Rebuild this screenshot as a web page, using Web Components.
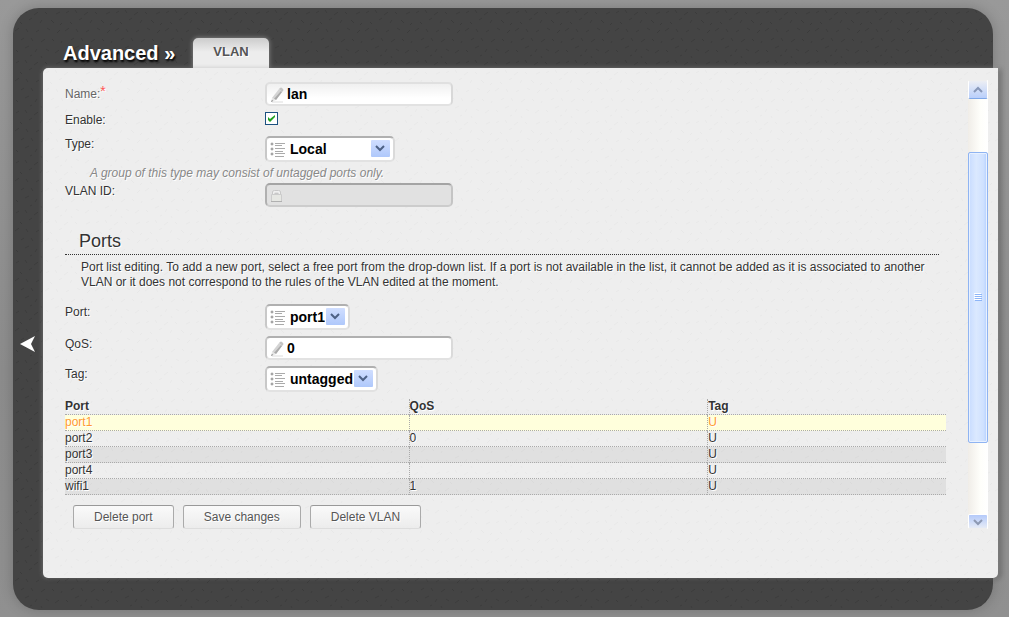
<!DOCTYPE html>
<html lang="en">
<head>
<meta charset="utf-8">
<title>VLAN</title>
<style>
body {
    margin: 0;
    background: linear-gradient(#999, #8c8c8c 60%, #909090);
    color: #333;
    font: 12px/15px "Liberation Sans", Arial, sans-serif;
    text-shadow: 1px 1px 0 #fff;
    min-height: 100vh;
}
</style>
</head>
<body>

<router-shell heading="Advanced »" tab="VLAN">
    <form-field kind="text" label="Name:" value="lan" required soft></form-field>
    <form-field kind="checkbox" label="Enable:"></form-field>
    <form-field kind="select" label="Type:" value="Local" style="--select-width: 130px" hint="A group of this type may consist of untagged ports only."></form-field>
    <form-field kind="text" label="VLAN ID:" value="" disabled></form-field>

    <form-section heading="Ports">
        Port list editing. To add a new port, select a free port from the drop-down list. If a port is not available in the list, it cannot be added as it is associated to another VLAN or it does not correspond to the rules of the VLAN edited at the moment.
    </form-section>

    <form-field kind="select" label="Port:" value="port1"></form-field>
    <form-field kind="text" label="QoS:" value="0"></form-field>
    <form-field kind="select" label="Tag:" value="untagged"></form-field>

    <port-table></port-table>

    <button-bar>
        <action-button>Delete port</action-button>
        <action-button>Save changes</action-button>
        <action-button>Delete VLAN</action-button>
    </button-bar>
</router-shell>

<script>
const grain = (color) => `url("data:image/svg+xml,${encodeURIComponent(`
    <svg xmlns="http://www.w3.org/2000/svg" width="50" height="50">
        <g fill="none" stroke="${color}">
            <path d="M3 5l3-2M12 2l2 3M21 7l4-3M32 4l2 2M43 6l4-2M7 14l2 2M16 12l3-2M27 15l2-3M38 12l3 3M47 17l2-2"/>
            <path d="M2 23l4-3M13 21l2 3M23 24l3-2M34 20l3 2M44 25l3-3M8 32l3-2M18 30l2 3M28 34l4-3M39 31l2 2M48 35l1-2"/>
            <path d="M3 42l2 2M12 40l4-2M22 44l2-3M33 41l3 2M42 45l4-3M17 48l2-1M28 48l1 2"/>
        </g>
    </svg>`.replace(/\s+/g, " "))}")`;

const icons = {
    pencil: `
        <svg width="16" height="16" viewBox="0 0 16 16">
            <path d="M2 15h11" stroke="#ddd"/>
            <path d="M2 11l7-9 3 3-6 8z" fill="#d4d4d4"/>
            <path d="M6 13l6-8-1-1-7 8z" fill="#aaa"/>
            <path d="M9 2l1-1q1-1 2 0l1 1q1 1 0 2l-1 1z" fill="#c4c4c4"/>
            <path d="M1 15l1-4 4 2z" fill="#e4e4e4"/>
            <path d="M1 15l1-2 1 1z" fill="#777"/>
        </svg>`,
    list: `
        <svg width="16" height="16" viewBox="0 0 16 16">
            <path d="M5 2.500h10M5 4.500h7M5 7.500h10M5 10.500h8M5 12.500h10M5 15.500h9" stroke="#aaa"/>
            <g fill="#bbb" stroke="#999">
                <circle cx="2" cy="3" r="1"/><circle cx="2" cy="8" r="1"/><circle cx="2" cy="13" r="1"/>
            </g>
        </svg>`,
    lock: `
        <svg width="16" height="16" viewBox="0 0 16 16">
            <path d="M3.500 7V4.500q0-1.500 2-1.500h2q2 0 2 1.500V7" fill="none" stroke="#f0f0f0" stroke-width="2"/>
            <path d="M2.500 6V4q0-1.500 2-1.500h4q2 0 2 1.500v2M4.500 5.500h4" fill="none" stroke="#c8c8c8"/>
            <path d="M1.500 6.500h10v7h-10z" fill="#e6e7e3" stroke="#ccc"/>
            <path d="M1 13.500h11" stroke="#b0b0b0"/>
        </svg>`,
};

customElements.define("router-shell", class extends HTMLElement {
    constructor() {
        super();
        const shadowRoot = this.attachShadow({mode: "open"});
        shadowRoot.innerHTML = `
            <style>
            :host {
                display: grid;
                grid-template-columns: 30px minmax(0, 1fr);
                padding: 30px 0 32px;
                border-radius: 26px;
                margin: 8px 16px 7px 13px;
                background: ${grain("#3b3b3b")} #444;
                box-shadow: 0 0 14px rgba(0, 0, 0, .2);
            }
            header {
                grid-column: 2;
                display: flex;
                gap: 18px;
                height: 30px;
                padding-left: 20px;
            }
            h1 {
                margin: 0;
                font-size: 20px;
                line-height: 30px;
                color: #fff;
                text-shadow: 1px 2px 2px #000;
            }
            nav a {
                display: block;
                height: 30px;
                padding: 0 20px;
                border-radius: 5px 5px 0 0;
                background: linear-gradient(#ccc, #ededed 14px);
                box-shadow: 0 0 5px rgba(255, 255, 255, .4);
                color: #555;
                font-size: 13px;
                font-weight: bold;
                line-height: 27px;
                text-decoration: none;
            }
            .back {
                align-self: center;
                width: 30px;
                height: 30px;
                margin-top: 40px;
                padding: 7px;
                border: 0;
                background: none;
                cursor: pointer;
            }
            .back svg {
                display: block;
            }
            main {
                position: relative;
                display: grid;
                grid-template-columns: minmax(0, 1fr) 20px;
                gap: 22px;
                margin-right: -5px;
                padding: 12px 10px 49px 22px;
                border-radius: 5px 0 5px 5px;
                background: ${grain("#e8e8e8")} #eee;
                box-shadow: 0 0 5px rgba(255, 255, 255, .3), 3px 1px 5px rgba(0, 0, 0, .3);
            }
            .content {
                padding-top: 2px;
            }
            </style>
            <header>
                <h1></h1>
                <nav><a href="#vlan"></a></nav>
            </header>
            <button class="back" type="button" aria-label="Back">
                <svg width="16" height="18" viewBox="0 0 16 18"><path d="M0 9L15 1l-4 8 4 8z" fill="#fff"/></svg>
            </button>
            <main>
                <div class="content"><slot></slot></div>
                <scroll-rail></scroll-rail>
            </main>
        `;
        shadowRoot.querySelector("h1").textContent = this.getAttribute("heading");
        shadowRoot.querySelector("a").textContent = this.getAttribute("tab");
    }
});

customElements.define("scroll-rail", class extends HTMLElement {
    constructor() {
        super();
        const shadowRoot = this.attachShadow({mode: "open"});
        shadowRoot.innerHTML = `
            <style>
            :host {
                display: flex;
                flex-direction: column;
                background: linear-gradient(90deg, #f0ede8, #fefefa 60%, #fff);
            }
            button {
                display: grid;
                place-items: center;
                height: 19px;
                padding: 0;
                border: 1px solid #fff;
                border-top-color: #eee;
                border-bottom-color: #7fa8e8;
                border-radius: 2px;
                background: linear-gradient(#eceef4, #b9cffb);
                flex: none;
            }
            .down {
                height: 15px;
                border-color: #fff #fff #eee;
                background: linear-gradient(#b4cafa, #e6ebf6);
            }
            .track {
                flex: 1;
                display: flex;
                flex-direction: column;
            }
            .before {
                flex: 53;
            }
            .thumb {
                flex: 290;
                display: grid;
                place-items: center;
                border: 1px solid #8fb4f2;
                border-radius: 2px;
                background: linear-gradient(90deg, #c8dcff, #dbe9ff 40%, #cfe1ff 80%, #b5d0ff);
                box-shadow: inset 0 0 0 1px #e8f1ff;
            }
            .after {
                flex: 71;
            }
            </style>
            <button type="button" aria-label="Scroll up">
                <svg width="10" height="8" viewBox="0 0 10 8"><path d="M1 6l4-4 4 4" fill="none" stroke="#8797b8" stroke-width="2"/></svg>
            </button>
            <div class="track">
                <div class="before"></div>
                <div class="thumb">
                    <svg width="8" height="9" viewBox="0 0 8 9">
                        <path d="M0 .5h7M0 2.500h7M0 4.500h7M0 6.500h7" stroke="#fff"/>
                        <path d="M1 1.500h7M1 3.500h7M1 5.500h7M1 7.500h7" stroke="#8db5f8"/>
                    </svg>
                </div>
                <div class="after"></div>
            </div>
            <button class="down" type="button" aria-label="Scroll down">
                <svg width="10" height="8" viewBox="0 0 10 8"><path d="M1 2l4 4 4-4" fill="none" stroke="#8d99b3" stroke-width="2"/></svg>
            </button>
        `;
    }
});

customElements.define("form-field", class extends HTMLElement {
    constructor() {
        super();
        const shadowRoot = this.attachShadow({mode: "open"});
        shadowRoot.innerHTML = `
            <style>
            :host {
                display: block;
                margin-bottom: 6px;
            }
            .row {
                display: grid;
                grid-template-columns: 200px minmax(0, 1fr);
                align-items: start;
            }
            label {
                padding-top: 1px;
                margin-bottom: -1px;
            }
            :host([required]) label {
                padding-top: 5px;
                color: #666;
            }
            sup {
                color: #f55;
                font-size: 14px;
                line-height: 0;
                vertical-align: 2px;
            }
            .box {
                position: relative;
                justify-self: start;
                display: flex;
            }
            .box svg {
                position: absolute;
                left: 5px;
                top: 5px;
                pointer-events: none;
            }
            input[type=text], select {
                box-sizing: border-box;
                height: 24px;
                margin: 0;
                padding: 0 6px 0 20px;
                border: 2px solid;
                border-color: #b0b0b0 #dadada #e2e2e2 #c8c8c8;
                border-radius: 5px;
                background: #fff;
                color: #000;
                font: bold 14px "Liberation Sans", Arial, sans-serif;
                text-shadow: none;
            }
            input[type=text] {
                width: 188px;
            }
            :host([soft]) input {
                border-color: #e0e0e0 #d8d8d8 #e2e2e2 #dcdcdc;
                background: linear-gradient(#f0f0f0, #fff 14px);
            }
            input[type=text]:disabled {
                border-color: #a4a4a4 #c4c4c4 #ccc #b0b0b0;
                background: #e1e1e1;
            }
            select {
                appearance: none;
                width: var(--select-width, auto);
                height: 26px;
                padding: 0 23px;
            }
            .box .arrow {
                left: auto;
                right: 5px;
                top: 4px;
            }
            input[type=checkbox] {
                appearance: none;
                box-sizing: border-box;
                width: 13px;
                height: 13px;
                margin: 0 0 5px;
                border: 1px solid #1c5180;
                background: #fff;
            }
            .check {
                display: none;
            }
            .box input:checked ~ .check {
                display: block;
                left: 0;
                top: 0;
            }
            .hint {
                margin: 4px 0 -4px 25px;
                color: #888;
                font-style: italic;
            }
            </style>
            <div class="row">
                <label for="control"></label>
                <div class="box"></div>
            </div>
        `;

        const label = shadowRoot.querySelector("label");
        label.textContent = this.getAttribute("label");
        if (this.hasAttribute("required")) {
            label.insertAdjacentHTML("beforeend", "<sup>*</sup>");
        }
        shadowRoot.querySelector(".box").innerHTML = this.control();
        if (this.hasAttribute("hint")) {
            shadowRoot.querySelector(".row").insertAdjacentHTML("afterend", `<div class="hint">${this.getAttribute("hint")}</div>`);
        }
    }

    control() {
        const value = this.getAttribute("value");
        switch (this.getAttribute("kind")) {
            case "checkbox":
                return `
                    <input id="control" type="checkbox" checked>
                    <svg class="check" width="13" height="13" viewBox="0 0 13 13"><path d="M3 5v3l2 2 5-5V3L5 7z" fill="#21a121"/></svg>
                `;
            case "select":
                return `
                    <select id="control"><option>${value}</option></select>
                    ${icons.list}
                    <svg class="arrow" width="19" height="17" viewBox="0 0 19 17">
                        <defs><linearGradient id="blue" x2="0" y2="1"><stop stop-color="#d0deff"/><stop offset="1" stop-color="#afc8fb"/></linearGradient></defs>
                        <rect width="19" height="17" rx="1" fill="url(#blue)"/>
                        <path d="M5 6l4 4 4-4" fill="none" stroke="#4d6185" stroke-width="2"/>
                    </svg>
                `;
            default: {
                const disabled = this.hasAttribute("disabled");
                return `
                    <input id="control" type="text" value="${value}" ${disabled ? "disabled" : ""}>
                    ${disabled ? icons.lock : icons.pencil}
                `;
            }
        }
    }
});

customElements.define("form-section", class extends HTMLElement {
    constructor() {
        super();
        const shadowRoot = this.attachShadow({mode: "open"});
        shadowRoot.innerHTML = `
            <style>
            :host {
                display: block;
                margin: 23px 0 14px;
            }
            h2 {
                margin: 0 7px 5px 0;
                padding: 0 0 2px 14px;
                border-bottom: 1px dotted #333;
                font-size: 18px;
                font-weight: normal;
                line-height: 22px;
            }
            p {
                margin: 0 0 0 16px;
            }
            </style>
            <h2></h2>
            <p><slot></slot></p>
        `;
        shadowRoot.querySelector("h2").textContent = this.getAttribute("heading");
    }
});

customElements.define("port-table", class extends HTMLElement {
    constructor() {
        super();
        const rows = [
            ["port1", "", "U"],
            ["port2", "0", "U"],
            ["port3", "", "U"],
            ["port4", "", "U"],
            ["wifi1", "1", "U"],
        ];
        const shadowRoot = this.attachShadow({mode: "open"});
        shadowRoot.innerHTML = `
            <style>
            :host {
                display: block;
                margin-top: 7px;
            }
            table {
                width: 100%;
                border-spacing: 0;
                table-layout: fixed;
            }
            th, td {
                height: 15px;
                padding: 0;
                border-bottom: 1px dotted #aaa;
                text-align: left;
            }
            th + th, td + td {
                border-left: 1px dotted #aaa;
            }
            th:first-child {
                width: 39%;
            }
            th:last-child {
                width: 27%;
            }
            tbody tr:nth-child(odd) {
                background: rgba(0, 0, 0, .06);
            }
            tbody tr:first-child {
                background: #ffffdc;
                color: #f93;
            }
            </style>
            <table>
                <thead>
                    <tr><th>Port</th><th>QoS</th><th>Tag</th></tr>
                </thead>
                <tbody>
                    ${rows.map(row => `<tr>${row.map(cell => `<td>${cell}</td>`).join("")}</tr>`).join("")}
                </tbody>
            </table>
        `;
    }
});

customElements.define("button-bar", class extends HTMLElement {
    constructor() {
        super();
        const shadowRoot = this.attachShadow({mode: "open"});
        shadowRoot.innerHTML = `
            <style>
            :host {
                display: flex;
                gap: 9px;
                padding: 10px 8px 0;
            }
            </style>
            <slot></slot>
        `;
    }
});

customElements.define("action-button", class extends HTMLElement {
    constructor() {
        super();
        const shadowRoot = this.attachShadow({mode: "open"});
        shadowRoot.innerHTML = `
            <style>
            :host {
                display: block;
            }
            button {
                height: 24px;
                padding: 0 20px;
                border: 1px solid;
                border-color: #999 #aaa #ddd;
                border-radius: 3px;
                background: linear-gradient(#fafafa, #ececec);
                color: #555;
                cursor: pointer;
                font: inherit;
                text-shadow: inherit;
            }
            button:hover {
                color: #222;
            }
            </style>
            <button type="button"><slot></slot></button>
        `;
    }
});
</script>
</body>
</html>
